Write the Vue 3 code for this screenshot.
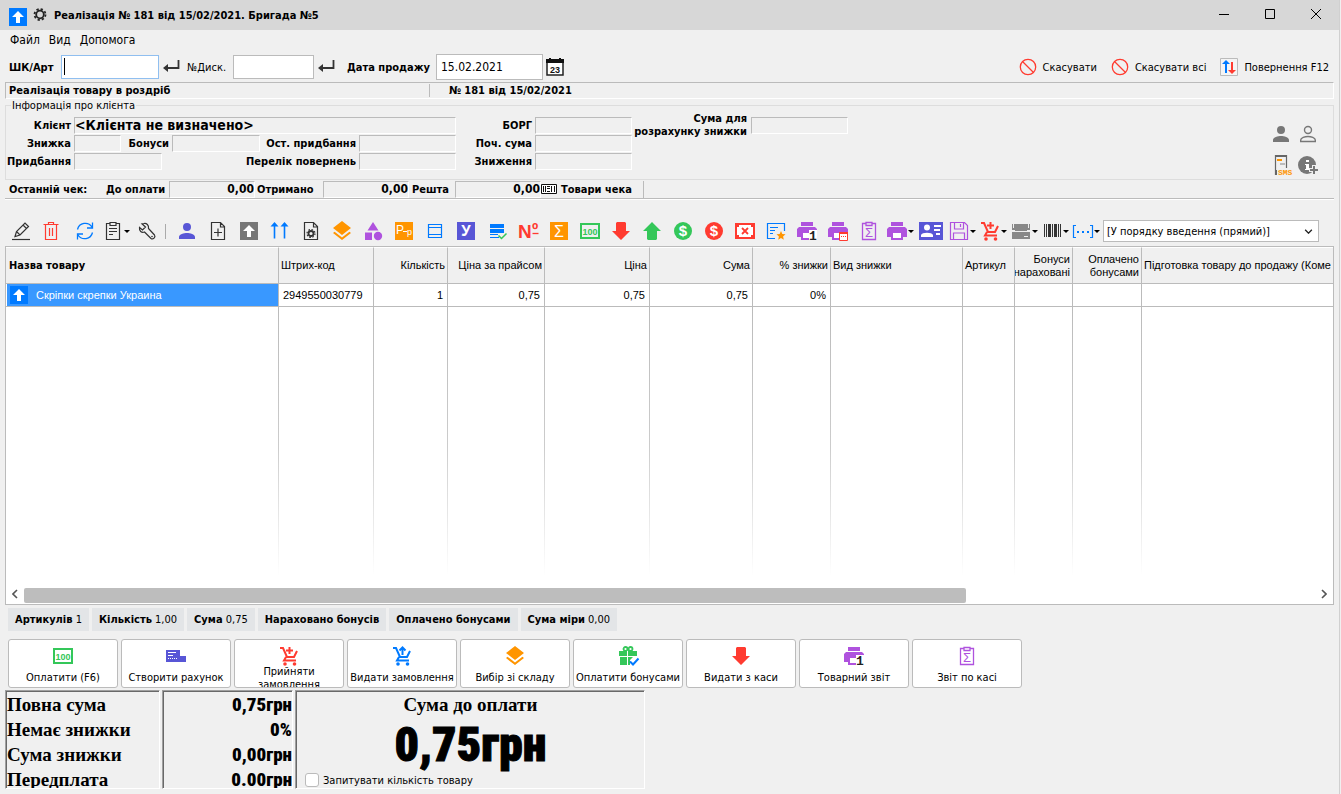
<script setup>
import { ref } from 'vue'

const RED = '#ff3b30'
const BLUE = '#007aff'
const GREEN = '#34c759'
const ORANGE = '#ff9500'
const INDIGO = '#5856d6'
const PURPLE = '#af52de'
const DARK = '#333'

const layers = `<path fill="${ORANGE}" d="M12 18.5l-7.4-5.7L3 14.1l9 7 9-7-1.600-1.300zM12 16l9-7-9-7-9 7z"/>`
const banknote = `<path fill="${GREEN}" fill-rule="evenodd" d="M2 4h20v16H2zM4 6v12h16V6z"/><text x="12" y="16" text-anchor="middle" font-size="9" font-weight="700" fill="${GREEN}">100</text>`
const arrowDown = `<path fill="${RED}" d="M8 3h8l1 1v8h4l-9 9-9-9h4V4z"/>`
const printer = `<path fill="${PURPLE}" d="M6 3h12v4H6zM4 8h16l2 2v8h-4v3H6v-3H2v-8z"/><path fill="#fff" d="M8 14h8v5H8z"/>`
const printerOne = `${printer}<path fill="#fff" d="M14 11h8v10h-8z"/><text x="18" y="21" text-anchor="middle" font-size="13" font-weight="700" class="mono" fill="#222">1</text>`
const cartBody = (c) => `<g fill="none" stroke="${c}" stroke-width="2"><path d="M3 4h3l4 9h7l3-6M9 13l-2 3.500h12"/></g><circle cx="8" cy="20" r="1.800" fill="${c}"/><circle cx="17.500" cy="20" r="1.800" fill="${c}"/>`
const cartPlus = `${cartBody(RED)}<path stroke="${RED}" stroke-width="2" d="M12.500 3v7M9 6.500h7"/>`
const cartUp = `${cartBody(BLUE)}<path fill="none" stroke="${BLUE}" stroke-width="2" d="M12.500 11V4M9.500 6.500l3-3 3 3"/>`
const clipSum = `<g fill="none" stroke="${PURPLE}" stroke-width="1.300"><path d="M9 4.500H5.500v16h13v-16H15M9 3.500h6v3H9z"/></g><text x="12" y="18" text-anchor="middle" font-size="13" fill="${PURPLE}">Σ</text>`
const forbidden = `<g fill="none" stroke="${RED}" stroke-width="1.300"><circle cx="12" cy="12" r="7.700"/><path d="M6.500 6.500l11 11"/></g>`
const dollar = (c) => `<circle cx="12" cy="12" r="9" fill="${c}"/><text x="12" y="17" text-anchor="middle" font-size="15" font-weight="700" fill="#fff">$</text>`

const icons = {
  pencil: `<g fill="none" stroke="${DARK}" stroke-width="1.200"><path d="M7 17.500l1.500-5L17 4l3.500 3.500L12 16zM15 6l3.500 3.500M8.500 12.500L12 16"/><path d="M4 20.500h18"/></g>`,
  trash: `<g fill="none" stroke="${RED}" stroke-width="1.200"><path d="M4.500 5.500h15M9.500 5V3.500h5V5M6.500 5.500v15h11v-15M10.500 9v8M13.500 9v8"/></g>`,
  refresh: `<g fill="none" stroke="${BLUE}" stroke-width="1.300"><path d="M4.500 10.500A8 8 0 0 1 19 8M19.500 3.500V9H14M19.500 13.500A8 8 0 0 1 5 16M4.500 20.500V15H10"/></g>`,
  clipboard: `<g fill="none" stroke="${DARK}" stroke-width="1.200"><path d="M9 4.500H5.500v16h13v-16H15M9 3.500h6v3H9zM8 9.500h8M8 12.500h8M8 15.500h4"/></g>`,
  wrench: `<path fill="none" stroke="${DARK}" stroke-width="1.200" d="M9 4.500c2.500-.5 5 1.500 4.500 5l6 6.500c1.500 2-1.500 5-3.500 3.500l-6.500-6.500c-3 1-5.500-1-5-4.500L7.500 11l3-3L7 4.800z"/><circle cx="17" cy="17.500" r=".8" fill="${DARK}"/>`,
  user: `<path fill="${INDIGO}" d="M12 12a4 4 0 1 0 0-8 4 4 0 0 0 0 8zm0 2c-3 0-8 1.300-8 4v2h16v-2c0-2.700-5-4-8-4z"/>`,
  filePlus: `<path fill="none" stroke="${DARK}" stroke-width="1.200" d="M14.500 3.500h-9v17h13v-13zV8h4M12 9.500v8M8 13.500h8"/>`,
  upBox: `<path fill="#777" d="M3 3h18v18H3z"/><path fill="#fff" d="M12 6l6 6h-4v6h-4v-6H6z"/>`,
  twoUp: `<g stroke="${BLUE}" stroke-width="1.600" fill="none"><path d="M6.500 19.500V5M16.500 19.500V5"/></g><path fill="${BLUE}" d="M6.500 3l4 4.500h-8zM16.500 3l4 4.500h-8z"/>`,
  fileGear: `<path fill="none" stroke="${DARK}" stroke-width="1.200" d="M14.500 3.500h-9v17h13v-13zV8h4"/><circle cx="12" cy="14.500" r="2.500" fill="none" stroke="${DARK}" stroke-width="1.800"/><circle cx="12" cy="14.500" r="4" fill="none" stroke="${DARK}" stroke-width="1.200" stroke-dasharray="1.600 1.540"/>`,
  layers,
  shapes: `<path fill="${PURPLE}" d="M12 3l5.500 8.500h-11zM4 13.500h7V21H4z"/><circle cx="17" cy="17" r="4.200" fill="${PURPLE}"/>`,
  pp: `<path fill="${ORANGE}" d="M3 3h18v18H3z"/><text x="4" y="15" font-size="12" fill="#fff">P</text><path stroke="#fff" d="M11 12.500h4"/><text x="15" y="16" font-size="9" fill="#fff">p</text>`,
  table: `<path fill="none" stroke="${BLUE}" stroke-width="1.200" d="M5.500 5.500h13v13h-13zM5 8.500h14M5 15.500h14"/>`,
  letterU: `<path fill="${INDIGO}" d="M3 3h18v18H3z"/><text x="12" y="17" text-anchor="middle" font-size="16" font-weight="700" class="mono" fill="#fff">У</text>`,
  tableCheck: `<path fill="${BLUE}" d="M5 5h14v4H5zM5 10h14v4H5zM5 15h8v1H5zM5 18h9v1H5z"/><path fill="none" stroke="${GREEN}" stroke-width="1.500" d="M13.500 16.500l3 3 5-5"/>`,
  number: `<text x="2" y="19" font-size="19" font-weight="700" fill="${RED}">N</text><text x="16" y="17" font-size="17" font-weight="700" fill="${RED}">º</text><path stroke="${RED}" stroke-width="1.300" d="M16.500 14.500h6"/>`,
  sum: `<path fill="${ORANGE}" d="M3 3h18v18H3z"/><text x="12" y="18" text-anchor="middle" font-size="16" fill="#fff">Σ</text>`,
  banknote,
  arrowDown,
  arrowUp: `<path fill="${GREEN}" d="M8 21h8l1-1v-8h4l-9-9-9 9h4v8z"/>`,
  dollarGreen: dollar(GREEN),
  dollarRed: dollar(RED),
  cancelNote: `<path fill="${RED}" d="M2 4h20v16H2z"/><path fill="#fff" d="M6 6h12v2h2v8h-2v2H6v-2H4V8h2z"/><path stroke="${RED}" stroke-width="1.800" d="M9 9l6 6M15 9l-6 6"/>`,
  noteStar: `<path fill="none" stroke="${BLUE}" stroke-width="1.200" d="M11 19.500H3.500v-15h17V12M6 8.500h8M6 11.500h5M6 14.500h3"/><path fill="${ORANGE}" d="M17 12l1.300 3 3.200.3-2.400 2.100.7 3.300L17 19l-2.800 1.700.7-3.300-2.400-2.100 3.200-.3z"/>`,
  printerOne,
  printerCal: `${printer}<path fill="#fff" stroke="${RED}" d="M13.500 13.500h8v8h-8z"/><path fill="${RED}" d="M13 13h9v2h-9zM15 17h1v1h-1zM17 17h1v1h-1zM19 17h1v1h-1z"/>`,
  clipSum,
  printer,
  card: `<path fill="${INDIGO}" d="M0 3h24v18H0z"/><circle cx="8" cy="8.500" r="3" fill="#fff"/><path fill="#fff" d="M2 18v-2c1-3 11-3 12 0v2zM15 6h7v2h-7zM15 10h6v2h-6zM17 14h4v2h-4z"/>`,
  save: `<path fill="none" stroke="${PURPLE}" stroke-width="1.200" d="M3.500 3.500h14l3 3v14h-17zM7.500 4v6h9V4M13.500 5v3M6.500 20v-6h11v6"/>`,
  cartPlus,
  cartUp,
  drawer: `<path fill="#888" d="M5 5h14v4h2v11H3V9h2z"/><path fill="#888" d="M3 5h1v4H3zM20 5h1v4h-1z"/><path fill="#eee" d="M3 11h3v1h12v-1h3v2H3zM15 17h4v1h-4z"/>`,
  barcode: `<path fill="${DARK}" d="M4 5h1v13H4zM6 5h1v13H6zM8 5h3v13H8zM12 5h1v13h-1zM14 5h3v13h-3zM18 5h1v13h-1zM20 5h1v13h-1z"/>`,
  brackets: `<path fill="none" stroke="${BLUE}" stroke-width="1.200" d="M5 6.500H2.500v12H5M19 6.500h2.500v12H19"/><path fill="${BLUE}" d="M6 12h2v2H6zM11 12h2v2h-2zM16 12h2v2h-2z"/>`,
  invoice: `<path fill="${INDIGO}" d="M2 6h14v6h6v6H2z"/><path stroke="#fff" d="M4 8.500h8M4 11.500h5"/><path stroke="#fff" stroke-dasharray="1 1" d="M4 14.500h10"/>`,
  gift: `<path fill="${GREEN}" d="M3 7h18v5H3zM4 13h7v8H4zM12 13h5l-3 3v5h-2z"/><g fill="none" stroke="${GREEN}" stroke-width="1.800"><circle cx="9.500" cy="5" r="2"/><circle cx="14.500" cy="5" r="2"/></g><path stroke="#fff" d="M11.500 7v14"/><path fill="none" stroke="${BLUE}" stroke-width="2" d="M14 17.500l3 3 5.500-6"/>`,
  forbidden,
  swap: `<path fill="#f4f4f4" stroke="#bbb" d="M3.500 3.500h17v17h-17z"/><path fill="${BLUE}" d="M9 5l4 4h-3v9H8V9H5z"/><path fill="${RED}" d="M15 19l-4-4h3V7h2v8h3z"/>`,
  person: `<path fill="#777" d="M12 12a4 4 0 1 0 0-8 4 4 0 0 0 0 8zm0 2c-3 0-8 1.300-8 4v2h16v-2c0-2.700-5-4-8-4z"/>`,
  personLine: `<path fill="none" stroke="#777" stroke-width="1.400" d="M12 11.500a3.500 3.500 0 1 0 0-7 3.500 3.500 0 0 0 0 7zm0 3c-3 0-7.300 1.300-7.300 3.500v1.500h14.600V18c0-2.200-4.300-3.500-7.300-3.500z"/>`,
  sms: `<path fill="none" stroke="#666" stroke-width="1.200" d="M8 21.500H6.500v-19h11V15"/><path fill="#666" d="M6 2h12v2H6zM6 17h2v5H6z"/><path fill="${ORANGE}" d="M8 6h5v2H8z"/><path fill="#bbb" d="M11 10h5v2h-5z"/><text x="9" y="22" font-size="8" font-weight="700" class="mono" fill="${ORANGE}">SMS</text>`,
  infoPlus: `<circle cx="11" cy="12" r="9" fill="#777"/><path fill="#fff" d="M10 7h3v2h-3zM9 11h4v5h1v1H9v-1h1v-4H9z"/><path stroke="#f0f0f0" stroke-width="4" d="M18 12v10M13 17h10"/><path stroke="#777" stroke-width="2" d="M18 13v8M14 17h8"/>`,
  upTile: `<path fill="${BLUE}" d="M3 3h18v18H3z"/><path fill="#fff" d="M12 6l6 6h-4v6h-4v-6H6z"/>`,
  gear: `<circle cx="12" cy="11.500" r="3.800" fill="none" stroke="#222" stroke-width="1.800"/><circle cx="12" cy="11.500" r="5.500" fill="none" stroke="#222" stroke-width="1.800" stroke-dasharray="2.300 2.020"/>`,
  enter: `<path fill="none" stroke="#333" stroke-width="1.800" d="M19.500 5v8H6"/><path fill="#333" d="M4 13l5-4v8z"/>`,
  calendar: `<path fill="#fff" stroke="#222" stroke-width="1.500" d="M4 5h16v15H4z"/><path fill="#111" d="M3 4h18v4H3zM6 3h2v2H6zM16 3h2v2h-2z"/><text x="12" y="18" text-anchor="middle" font-size="9" font-weight="700" fill="#111">23</text>`,
  minimise: `<path stroke="#000" d="M7 11.500h10"/>`,
  maximise: `<path fill="none" stroke="#000" d="M7.500 6.500h9v9h-9z"/>`,
  close: `<path stroke="#000" d="M7 6l10 10M17 6L7 16"/>`,
  goods: `<path fill="#fff" stroke="#111" d="M4.500 7.500h15v9h-15z"/><path fill="#111" d="M6 9h1v6H6zM8 9h1v6H8zM10 9h3v1h-3zM10 11h3v1h-3zM10 14h3v1h-3zM14 9h1v6h-1zM17 9h1v6h-1z"/>`
}

const editTools = [
  { icon: 'refresh', title: 'Оновити' },
  { icon: 'clipboard', title: 'Документ', menu: true },
  { icon: 'wrench', title: 'Сервіс' }
]
const tools = [
  { icon: 'user', title: 'Клієнт' },
  { icon: 'filePlus', title: 'Новий документ' },
  { icon: 'upBox', title: 'Завантажити' },
  { icon: 'twoUp', title: 'Підняти' },
  { icon: 'fileGear', title: 'Налаштування документа' },
  { icon: 'layers', title: 'Склад' },
  { icon: 'shapes', title: 'Групи' },
  { icon: 'pp', title: 'Роздріб' },
  { icon: 'table', title: 'Таблиця' },
  { icon: 'letterU', title: 'Упаковка' },
  { icon: 'tableCheck', title: 'Перевірити' },
  { icon: 'number', title: 'Номер' },
  { icon: 'sum', title: 'Підсумок' },
  { icon: 'banknote', title: 'Оплата' },
  { icon: 'arrowDown', title: 'Видати' },
  { icon: 'arrowUp', title: 'Прийняти' },
  { icon: 'dollarGreen', title: 'Прихід' },
  { icon: 'dollarRed', title: 'Витрата' },
  { icon: 'cancelNote', title: 'Скасувати оплату' },
  { icon: 'noteStar', title: 'Примітка' },
  { icon: 'printerOne', title: 'Товарний звіт' },
  { icon: 'printerCal', title: 'Звіт за період' },
  { icon: 'clipSum', title: 'Звіт по касі' },
  { icon: 'printer', title: 'Друк', menu: true },
  { icon: 'card', title: 'Картка' },
  { icon: 'save', title: 'Зберегти', menu: true },
  { icon: 'cartPlus', title: 'Замовлення', menu: true },
  { icon: 'drawer', title: 'Каса', menu: true },
  { icon: 'barcode', title: 'Штрих-код', menu: true },
  { icon: 'brackets', title: 'Інше', menu: true }
]

const columns = [
  { label: 'Назва товару', width: 273, bold: true },
  { label: 'Штрих-код', width: 95 },
  { label: 'Кількість', width: 74, num: true },
  { label: 'Ціна за прайсом', width: 97, num: true },
  { label: 'Ціна', width: 105, num: true },
  { label: 'Сума', width: 103, num: true },
  { label: '% знижки', width: 78, num: true },
  { label: 'Вид знижки', width: 132 },
  { label: 'Артикул', width: 52 },
  { label: 'Бонуси нараховані', width: 58, num: true },
  { label: 'Оплачено бонусами', width: 69, num: true },
  { label: 'Підготовка товару до продажу (Коме', width: 0 }
]
const row = ['2949550030779', '1', '0,75', '0,75', '0,75', '0%', '', '', '', '', '']

const chips = [
  ['Артикулів', '1'],
  ['Кількість', '1,00'],
  ['Сума', '0,75'],
  ['Нараховано бонусів', ''],
  ['Оплачено бонусами', ''],
  ['Сума міри', '0,00']
]
const actions = [
  ['banknote', 'Оплатити (F6)'],
  ['invoice', 'Створити рахунок'],
  ['cartPlus', 'Прийняти замовлення'],
  ['cartUp', 'Видати замовлення'],
  ['layers', 'Вибір зі складу'],
  ['gift', 'Оплатити бонусами'],
  ['arrowDown', 'Видати з каси'],
  ['printerOne', 'Товарний звіт'],
  ['clipSum', 'Звіт по касі']
]
const totals = [
  ['Повна сума', '0,75грн'],
  ['Немає знижки', '0%'],
  ['Сума знижки', '0,00грн'],
  ['Передплата', '0.00грн']
]
const scrollShare = ref(73)
const saleDate = ref('15.02.2021')
</script>

<template>
  <div class="window">
    <header class="titlebar">
      <svg class="ico" viewBox="0 0 24 24" v-html="icons.upTile" />
      <svg class="ico gear" viewBox="0 0 24 24" v-html="icons.gear" />
      <h1>Реалізація № 181 від 15/02/2021. Бригада №5</h1>
      <button class="win" aria-label="Згорнути"><svg class="ico" viewBox="0 0 24 24" v-html="icons.minimise" /></button>
      <button class="win" aria-label="Розгорнути"><svg class="ico" viewBox="0 0 24 24" v-html="icons.maximise" /></button>
      <button class="win" aria-label="Закрити"><svg class="ico" viewBox="0 0 24 24" v-html="icons.close" /></button>
    </header>

    <nav class="menu">
      <button>Файл</button><button>Вид</button><button>Допомога</button>
    </nav>

    <div class="entry">
      <label class="ms w-code" for="code">ШК/Арт</label>
      <input id="code" class="focused" type="text" />
      <button class="enter" aria-label="Ввести код"><svg class="ico" viewBox="0 0 24 24" v-html="icons.enter" /></button>
      <label class="w-disc" for="disc">№Диск.</label>
      <input id="disc" class="disc" type="text" />
      <button class="enter" aria-label="Ввести картку"><svg class="ico" viewBox="0 0 24 24" v-html="icons.enter" /></button>
      <label class="ms w-date" for="date">Дата продажу</label>
      <input id="date" v-model="saleDate" class="date" type="text" />
      <button aria-label="Календар"><svg class="ico" viewBox="0 0 24 24" v-html="icons.calendar" /></button>
      <div class="cancel">
        <button><svg class="ico" viewBox="0 0 24 24" v-html="icons.forbidden" />Скасувати</button>
        <button><svg class="ico" viewBox="0 0 24 24" v-html="icons.forbidden" />Скасувати всі</button>
        <button><svg class="ico" viewBox="0 0 24 24" v-html="icons.swap" />Повернення F12</button>
      </div>
    </div>

    <div class="strip">
      <span class="ms kind">Реалізація товару в роздріб</span>
      <strong>№ 181 від 15/02/2021</strong>
    </div>

    <fieldset class="client">
      <legend>Інформація про клієнта</legend>
      <div class="group left ms">
        <div class="line"><span class="cap">Клієнт</span><output class="box grow name">&lt;Клієнта не визначено&gt;</output></div>
        <div class="line">
          <span class="cap">Знижка</span><output class="box tiny"></output>
          <span class="cap2">Бонуси</span><output class="box mid"></output>
          <span class="push">Ост. придбання</span><output class="box"></output>
        </div>
        <div class="line">
          <span class="cap">Придбання</span><output class="box mid"></output>
          <span class="push">Перелік повернень</span><output class="box"></output>
        </div>
      </div>
      <div class="group debt ms">
        <div class="line"><span class="push">БОРГ</span><output class="box"></output></div>
        <div class="line"><span class="push">Поч. сума</span><output class="box"></output></div>
        <div class="line"><span class="push">Зниження</span><output class="box"></output></div>
      </div>
      <div class="group base ms">
        <div class="line"><span class="two">Сума для розрахунку знижки</span><output class="box"></output></div>
      </div>
      <div class="people">
        <button aria-label="Клієнт"><svg class="ico" viewBox="0 0 24 24" v-html="icons.person" /></button>
        <button aria-label="Новий клієнт"><svg class="ico" viewBox="0 0 24 24" v-html="icons.personLine" /></button>
        <button aria-label="SMS"><svg class="ico" viewBox="0 0 24 24" v-html="icons.sms" /></button>
        <button aria-label="Інформація"><svg class="ico" viewBox="0 0 24 24" v-html="icons.infoPlus" /></button>
      </div>
    </fieldset>

    <div class="last ms">
      <span class="w-last">Останній чек:</span>
      <span class="w-pay">До оплати</span><output class="box val">0,00</output>
      <span class="w-got">Отримано</span><output class="box val">0,00</output>
      <span class="w-rest">Решта</span><output class="box val">0,00</output>
      <button class="goods"><svg class="ico" viewBox="0 0 24 24" v-html="icons.goods" />Товари чека</button>
    </div>

    <div class="toolbar">
      <button title="Редагувати"><svg class="ico" viewBox="0 0 24 24" v-html="icons.pencil" /></button>
      <button title="Видалити"><svg class="ico" viewBox="0 0 24 24" v-html="icons.trash" /></button>
      <span class="gap"></span>
      <button v-for="t in editTools" :key="t.icon" :title="t.title" :class="{ drop: t.menu }">
        <svg class="ico" viewBox="0 0 24 24" v-html="icons[t.icon]" />
      </button>
      <span class="sep"></span>
      <button v-for="t in tools" :key="t.icon" :title="t.title" :class="{ drop: t.menu }">
        <svg class="ico" viewBox="0 0 24 24" v-html="icons[t.icon]" />
      </button>
      <div class="order">
        <select aria-label="Порядок">
          <option>[У порядку введення (прямий)]</option>
        </select>
        <svg class="chev" viewBox="0 0 10 6"><path fill="none" stroke="#222" stroke-width="1.6" d="M1 1l4 4 4-4" /></svg>
      </div>
    </div>

    <section class="sheet">
      <table>
        <colgroup>
          <col v-for="c in columns" :key="c.label" :style="c.width ? { width: c.width + 'px' } : {}" />
        </colgroup>
        <thead>
          <tr>
            <th v-for="c in columns" :key="c.label" :class="{ num: c.num, bold: c.bold }"><span>{{ c.label }}</span></th>
          </tr>
        </thead>
        <tbody>
          <tr class="item">
            <td class="picked">
              <div><svg class="ico" viewBox="0 0 24 24" v-html="icons.upTile" />Скріпки скрепки Украина</div>
            </td>
            <td v-for="(v, i) in row" :key="i" :class="{ num: columns[i + 1].num }">{{ v }}</td>
          </tr>
          <tr class="rest"><td v-for="c in columns" :key="c.label"></td></tr>
        </tbody>
      </table>
      <div class="scroll">
        <button aria-label="Ліворуч"><svg viewBox="0 0 6 10"><path fill="none" stroke="#555" stroke-width="1.6" d="M5 1L1 5l4 4" /></svg></button>
        <div class="track"><div class="thumb" :style="{ width: scrollShare + '%' }"></div></div>
        <button aria-label="Праворуч"><svg viewBox="0 0 6 10"><path fill="none" stroke="#555" stroke-width="1.6" d="M1 1l4 4-4 4" /></svg></button>
      </div>
    </section>

    <div class="chips">
      <span v-for="c in chips" :key="c[0]"><b>{{ c[0] }}</b> {{ c[1] }}</span>
    </div>

    <div class="actions">
      <button v-for="a in actions" :key="a[1]">
        <svg class="ico" viewBox="0 0 24 24" v-html="icons[a[0]]" />
        <span>{{ a[1] }}</span>
      </button>
    </div>

    <footer class="totals">
      <div class="panel names"><div v-for="t in totals" :key="t[0]">{{ t[0] }}</div></div>
      <div class="panel sums"><div v-for="t in totals" :key="t[0]">{{ t[1] }}</div></div>
      <div class="panel due">
        <h2>Сума до оплати</h2>
        <output>0,75грн</output>
        <label><input type="checkbox" />Запитувати кількість товару</label>
      </div>
    </footer>
  </div>
</template>

<style>
body {
  background: #f0f0f0;
}
</style>

<style scoped>
* {
  box-sizing: border-box;
}
.window {
  display: flex;
  flex-direction: column;
  min-height: 100vh;
  margin-right: 1px;
  padding-bottom: 5px;
  border-right: 1px solid #d0d0d0;
  background: #f0f0f0;
  color: #000;
  font: 11px/13px "DejaVu Sans Condensed", "Noto Sans", sans-serif;
  white-space: nowrap;
}
button {
  padding: 0;
  border: 0;
  background: none;
  color: inherit;
  font: inherit;
  white-space: nowrap;
}
.ico {
  display: block;
  flex: none;
  width: 24px;
  height: 24px;
  font-family: "Liberation Sans", sans-serif;
}
.ico :deep(.mono) {
  font-family: "Liberation Mono", monospace;
}
.ms {
  font-weight: 700;
}
.titlebar {
  display: flex;
  align-items: center;
  height: 30px;
  padding-left: 6px;
  background: #d7d7d7;
}
.titlebar > .ico {
  margin-top: 3px;
}
.titlebar > .gear {
  margin: 0 0 0 -2px;
}
h1 {
  flex: 1;
  margin: 0 0 0 2px;
  font-size: 11px;
}
.win {
  display: flex;
  justify-content: center;
  width: 46px;
}
.menu {
  display: flex;
  gap: 9px;
  height: 20px;
  padding-left: 10px;
  font-size: 12px;
}
.entry {
  display: flex;
  align-items: center;
  height: 32px;
  padding: 2px 10px 0 9px;
}
input[type="text"] {
  width: 98px;
  height: 24px;
  padding: 0 4px;
  border: 1px solid #bbb;
  background: #fff;
  font: 12px "DejaVu Sans Condensed", "Noto Sans", sans-serif;
}
/* active field with the text cursor at its start */
input.focused {
  border-color: #90bff0;
  background: linear-gradient(#000, #000) 2px 2px / 1px 17px no-repeat, #fff;
  outline: none;
}
input.disc {
  width: 81px;
}
input.date {
  width: 107px;
  height: 26px;
}
.enter {
  width: 26px;
}
.w-code {
  width: 52px;
}
.w-disc {
  width: 48px;
  padding-left: 2px;
}
.w-date {
  width: 96px;
  padding-left: 7px;
}
.cancel {
  display: flex;
  gap: 11px;
  margin-left: auto;
}
.cancel button {
  display: flex;
  gap: 3px;
  align-items: center;
}
.strip {
  display: flex;
  align-items: center;
  height: 17px;
  margin: 0 5px;
  border: 1px solid #bbb;
  border-right-color: #fff;
  border-bottom-color: #fff;
}
.kind {
  width: 424px;
  padding-left: 3px;
  border-right: 1px solid #bbb;
}
.strip strong {
  padding-left: 19px;
}
.client {
  display: flex;
  height: 81px;
  min-width: 0;
  margin: 0 5px;
  padding: 4px 13px 0 0;
  border: 1px solid #ddd;
}
legend {
  margin-left: 5px;
  padding: 0 1px;
}
.line {
  display: flex;
  align-items: center;
  height: 18px;
}
.left {
  width: 450px;
}
.debt {
  width: 176px;
}
.cap {
  display: flex;
  flex: none;
  justify-content: flex-end;
  width: 65px;
  margin-right: 3px;
}
.cap2 {
  width: 51px;
  padding-right: 3px;
  text-align: right;
}
.push {
  margin-left: auto;
  padding-right: 3px;
}
.box {
  flex: none;
  width: 97px;
  height: 17px;
  border: 1px solid #bbb;
  border-right-color: #fff;
  border-bottom-color: #fff;
}
.tiny {
  width: 47px;
}
.mid {
  width: 88px;
}
.grow {
  flex: 1;
}
.name {
  font-size: 14px;
  line-height: 15px;
}
.two {
  width: 119px;
  padding-right: 4px;
  text-align: right;
  white-space: normal;
}
.people {
  display: grid;
  grid-template-columns: 24px 24px;
  gap: 7px 3px;
  margin: 6px 0 0 auto;
}
.last {
  display: flex;
  align-items: center;
  height: 19px;
  margin: 0 5px;
  padding-left: 4px;
  border-bottom: 1px solid #bbb;
  box-shadow: 0 1px #fff;
}
.val {
  width: 86px;
  font-size: 12px;
  line-height: 15px;
  text-align: right;
}
.w-last {
  width: 97px;
}
.w-pay {
  width: 63px;
}
.w-got {
  width: 68px;
  padding-left: 2px;
}
.w-rest {
  width: 46px;
  padding-left: 3px;
}
.goods {
  display: flex;
  align-items: center;
  width: 107px;
  height: 17px;
  margin-left: -4px;
  border-right: 1px solid #bbb;
}
.toolbar {
  display: flex;
  align-items: center;
  height: 30px;
  margin: 17px 20px 0 5px;
}
.toolbar button {
  display: flex;
  flex: none;
  align-items: center;
  width: 31px;
  padding-left: 3px;
}
.toolbar .drop {
  padding-left: 0;
}
.drop::after {
  margin-left: -1px;
  border: 3px solid transparent;
  border-top-color: #000;
  border-bottom: 0;
  content: "";
}
.gap {
  width: 3px;
}
.sep {
  width: 1px;
  height: 15px;
  margin: 0 6px 0 2px;
  background: #aaa;
}
.order {
  position: relative;
  flex: 1;
  margin-left: 1px;
}
select {
  width: 100%;
  height: 22px;
  padding: 0 20px 0 3px;
  border: 1px solid #bbb;
  border-radius: 0;
  background: #fff;
  appearance: none;
  color: #000;
  font: 11px "DejaVu Sans Condensed", "Noto Sans", sans-serif;
}
.chev {
  position: absolute;
  top: 9px;
  right: 6px;
  width: 9px;
  height: 5px;
}
.sheet {
  display: flex;
  flex: 1;
  flex-direction: column;
  margin: 0 5px;
  border: 1px solid #bbb;
  background: #fff;
  font-family: "Liberation Sans", sans-serif;
}
table {
  flex: 1;
  width: 100%;
  border-spacing: 0;
  table-layout: fixed;
}
th,
td {
  overflow: hidden;
  padding: 0 2px;
  border-right: 1px solid #bbb;
  text-align: left;
}
th:last-child,
td:last-child {
  border-right: 0;
}
th {
  height: 37px;
  border-top: 1px solid #fff;
  border-bottom: 1px solid #bbb;
  background: #f0f0f0;
  font-weight: 400;
  white-space: normal;
}
th:last-child {
  white-space: nowrap;
}
th.bold {
  padding-left: 3px;
  font: 700 11px/13px "DejaVu Sans Condensed", sans-serif;
}
th.num {
  text-align: right;
}
th.num span {
  display: flex;
  justify-content: flex-end;
}
.item td {
  height: 23px;
  padding: 0 4px;
  border-bottom: 1px solid #bbb;
}
td.num {
  text-align: right;
}
.item .picked {
  padding: 0 0 0 1px;
  color: #fff;
}
.picked div {
  display: flex;
  gap: 5px;
  align-items: center;
  height: 22px;
  background: #3998ff;
}
.rest td {
  border-image: linear-gradient(#bbb, #ccc 50%, #fff 96%) 1;
}
.scroll {
  display: flex;
  align-items: center;
  height: 18px;
}
.scroll button {
  width: 18px;
}
.scroll svg {
  width: 6px;
  height: 10px;
}
.track {
  flex: 1;
}
.thumb {
  height: 15px;
  border-radius: 2px;
  background: #bdbdbd;
}
.chips {
  display: flex;
  gap: 3px;
  margin: 3px 0 8px 8px;
}
.chips span {
  height: 23px;
  padding: 0 7px;
  background: #e3e5e7;
  line-height: 23px;
}
.actions {
  display: flex;
  gap: 3px;
  margin: 0 6px 2px 8px;
}
.actions button {
  display: flex;
  flex-direction: column;
  align-items: center;
  width: 110px;
  height: 49px;
  padding-top: 4px;
  overflow: hidden;
  border: 1px solid #bbb;
  border-radius: 3px;
  background: #fff;
}
.actions span {
  display: flex;
  flex: none;
  align-items: center;
  width: 106px;
  height: 19px;
  justify-content: center;
  white-space: normal;
}
.totals {
  display: flex;
  gap: 2px;
  height: 99px;
  margin-left: 5px;
}
.panel {
  overflow: hidden;
  padding: 1px 0 0 1px;
  border: 1px solid #a0a0a0;
  border-right-color: #fff;
  border-bottom-color: #fff;
  box-shadow: inset 1px 1px #696969;
}
.names {
  width: 155px;
  font: 700 19px/25px "Liberation Serif", serif;
}
.sums {
  width: 131px;
  font: 900 19px/25px "Roboto Condensed", "Liberation Sans Narrow", sans-serif;
  text-align: right;
}
.due {
  width: 350px;
  text-align: center;
}
.due h2 {
  margin: 0;
  font: 700 19px/25px "Liberation Serif", serif;
}
.due output {
  display: block;
  font: 900 48px/56px "Roboto Condensed", "Liberation Sans Narrow", sans-serif;
  -webkit-text-stroke: 1px #000;
}
.due label {
  display: flex;
  gap: 4px;
  align-items: center;
  height: 14px;
  padding-left: 8px;
}
.due input {
  width: 14px;
  height: 14px;
  margin: 0;
  border: 1px solid #bbb;
  border-radius: 3px;
  background: #fff;
  appearance: none;
}
</style>
